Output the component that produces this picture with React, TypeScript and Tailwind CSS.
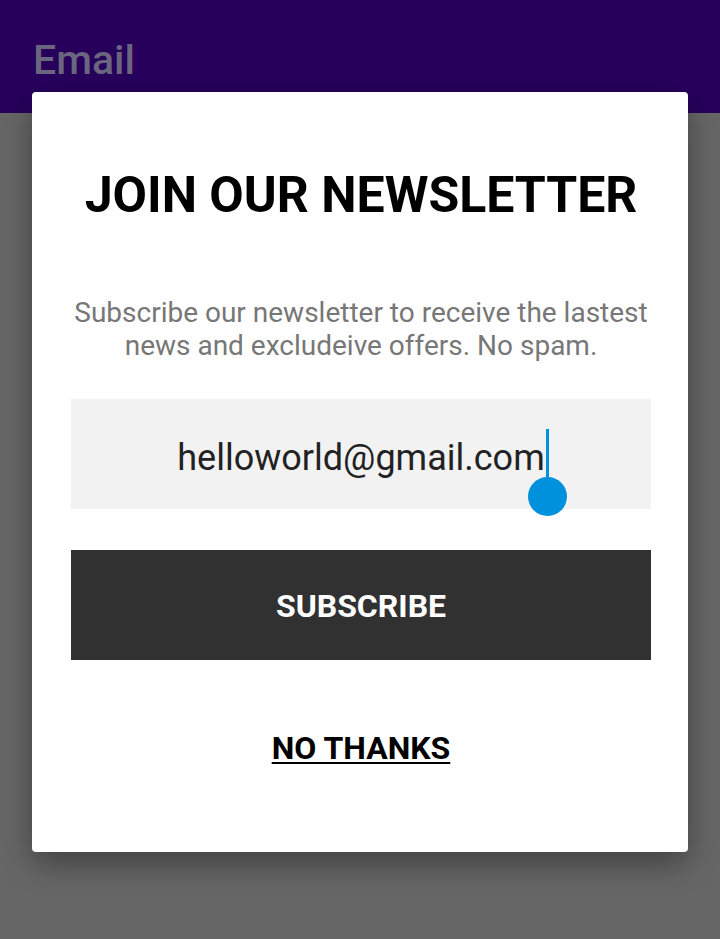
export default function App() {
  return (
    <div className="relative h-[939px] w-[720px] overflow-hidden bg-[#666666] font-['Roboto',sans-serif]">
      <div className="flex h-[113px] items-end bg-[#27005c] px-[33px] pb-[32px]">
        <span className="text-[41px] font-medium leading-none text-[#6b6680]">Email</span>
      </div>

      <div className="absolute left-[32px] top-[92px] flex h-[760px] w-[656px] flex-col items-center rounded-[4px] bg-white pl-[39px] pr-[37px] shadow-[0_12px_30px_rgba(0,0,0,0.35)]">
        <h1 className="mt-[78px] text-[50px] font-bold leading-none text-black">JOIN OUR NEWSLETTER</h1>

        <p className="mt-[76px] text-center text-[28px] leading-[33px] text-[#777777]">
          Subscribe our newsletter to receive the lastest
          <br />
          news and excludeive offers. No spam.
        </p>

        <div className="mt-[37px] flex h-[110px] w-full items-center justify-center bg-[#f2f2f2] pt-[8px]">
          <span className="relative text-[36px] leading-none text-[#222222]">
            helloworld@gmail.com
            <span className="absolute left-full top-[-11px] ml-[1px] h-[50px] w-[3px] bg-[#0091dd]">
              <span className="absolute left-[-18px] top-[48px] h-[39px] w-[39px] rounded-full bg-[#0091dd]" />
            </span>
          </span>
        </div>

        <button className="mt-[41px] flex h-[110px] w-full items-center justify-center bg-[#313131] pt-[1px] text-[32px] font-bold text-white">
          SUBSCRIBE
        </button>

        <button className="mt-[72px] text-[32px] font-bold leading-none text-black underline decoration-2 underline-offset-[3px]">
          NO THANKS
        </button>
      </div>
    </div>
  );
}
